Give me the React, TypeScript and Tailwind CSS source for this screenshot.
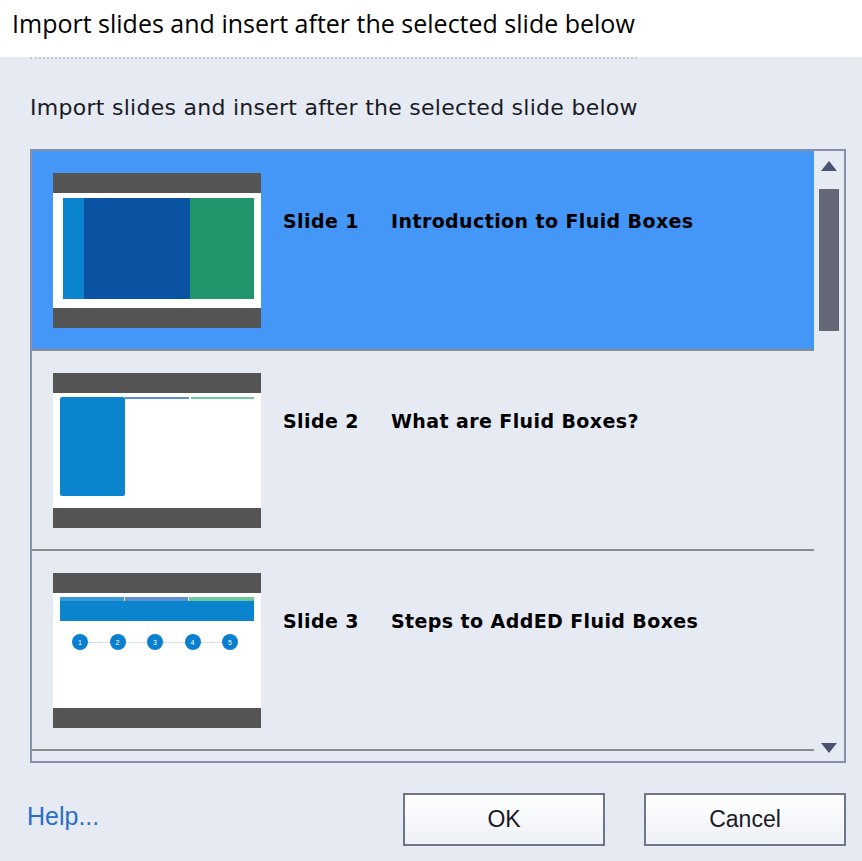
import React from 'react';

const Bar = () => <div className="h-[20px] bg-[#545454]" />;

// slide 1: three colored panels
const Thumb1 = () => (
  <div className="flex w-[208px] flex-none flex-col">
    <Bar />
    <div className="flex h-[115px] bg-white pl-[10px] pr-[7px] pt-[5px] pb-[9px]">
      <div className="w-[21px] bg-[#0a84cf]" />
      <div className="w-[106px] bg-[#0a53a3]" />
      <div className="flex-1 bg-[#20966a]" />
    </div>
    <Bar />
  </div>
);

// slide 2: side block + thin tab lines
const Thumb2 = () => (
  <div className="flex w-[208px] flex-none flex-col">
    <Bar />
    <div className="flex h-[115px] bg-white pl-[7px] pr-[7px] pt-[4px]">
      <div className="h-[99px] w-[65px] rounded-[2px] bg-[#0a84cf]" />
      <div className="flex flex-1 gap-[2px]">
        <div className="h-[2px] w-[64px] bg-[#5b8fd0]" />
        <div className="h-[2px] flex-1 bg-[#6cc79a]" />
      </div>
    </div>
    <Bar />
  </div>
);

// slide 3: header band + numbered steps
const Thumb3 = () => (
  <div className="flex w-[208px] flex-none flex-col">
    <Bar />
    <div className="flex h-[115px] flex-col bg-white pl-[7px] pr-[7px] pt-[4px]">
      <div className="flex h-[4px] gap-[1px]">
        <div className="w-[64px] bg-[#3a9ad8]" />
        <div className="w-[63px] bg-[#5b8fd0]" />
        <div className="flex-1 bg-[#6cc79a]" />
      </div>
      <div className="h-[20px] bg-[#0a84cf]" />
      <div className="mt-[13px] flex w-[178px] items-center pl-[12px]">
        {[1, 2, 3, 4, 5].map((n, i) => (
          <React.Fragment key={n}>
            {i > 0 && <div className="flex-1 border-t border-dotted border-[#b8c8dc]" />}
            <div className="flex h-[16px] w-[16px] items-center justify-center rounded-full bg-[#0a7fcf] text-[7px] leading-none text-white font-['Liberation_Sans',sans-serif]">
              {n}
            </div>
          </React.Fragment>
        ))}
      </div>
    </div>
    <Bar />
  </div>
);

const slides = [
  { num: 1, title: 'Introduction to Fluid Boxes', thumb: <Thumb1 /> },
  { num: 2, title: 'What are Fluid Boxes?', thumb: <Thumb2 /> },
  { num: 3, title: 'Steps to AddED Fluid Boxes', thumb: <Thumb3 /> },
];

const Arrow = ({ down }: { down?: boolean }) => (
  <svg width="16" height="10" viewBox="0 0 16 10">
    <path d={down ? 'M0 0 L16 0 L8 10 Z' : 'M8 0 L16 10 L0 10 Z'} fill="#4a5274" />
  </svg>
);

export default function App() {
  return (
    <div className="h-[861px] w-[862px] overflow-hidden bg-[#e6eaf3]">
      {/* Top caption */}
      <div className="h-[57px] bg-white pl-[12px] pt-[11px] text-[25px] leading-none text-black font-['Open_Sans',sans-serif]">
        Import slides and insert after the selected slide below
      </div>

      {/* remnant of the clipped dialog header line */}
      <div className="ml-[30px] h-[2px] w-[607px] border-t-2 border-dotted border-[#c2c9da]" />

      <div className="mt-[38px] pl-[30px] text-[22px] leading-none tracking-[0.27px] text-[#1a1a24] font-['DejaVu_Sans',sans-serif]">
        Import slides and insert after the selected slide below
      </div>

      {/* Slide list */}
      <div className="ml-[30px] mt-[30px] flex h-[614px] w-[816px] border-2 border-[#8790a8]">
        <div className="flex flex-1 flex-col overflow-hidden">
          {slides.map((s) => (
            <div
              key={s.num}
              className={`flex h-[200px] flex-none border-b-2 border-[#8c8c8c] pl-[21px] pt-[22px] ${
                s.num === 1 ? 'bg-[#4497f7]' : ''
              }`}
            >
              {s.thumb}
              <div className="ml-[22px] mt-[39px] flex text-[19px] font-bold leading-none tracking-[0.4px] text-black font-['DejaVu_Sans',sans-serif]">
                <span className="w-[108px]">Slide {s.num}</span>
                <span>{s.title}</span>
              </div>
            </div>
          ))}
        </div>
        <div className="flex w-[30px] flex-col items-center pb-[8px] pt-[10px]">
          <Arrow />
          <div className="mt-[18px] h-[142px] w-[20px] bg-[#646876]" />
          <div className="mt-auto">
            <Arrow down />
          </div>
        </div>
      </div>

      {/* Footer */}
      <div className="mt-[30px] flex items-center pl-[27px] pr-[16px]">
        <span className="-mt-[6px] text-[25px] text-[#2a6dc9] font-['Liberation_Sans',sans-serif]">Help...</span>
        <button className="ml-auto h-[53px] w-[202px] border-2 border-[#6f7689] bg-gradient-to-b from-white to-[#eef1f6] text-[23px] text-[#1a1a24] font-['Liberation_Sans',sans-serif]">
          OK
        </button>
        <button className="ml-[39px] h-[53px] w-[202px] border-2 border-[#6f7689] bg-gradient-to-b from-white to-[#eef1f6] text-[23px] text-[#1a1a24] font-['Liberation_Sans',sans-serif]">
          Cancel
        </button>
      </div>
    </div>
  );
}
